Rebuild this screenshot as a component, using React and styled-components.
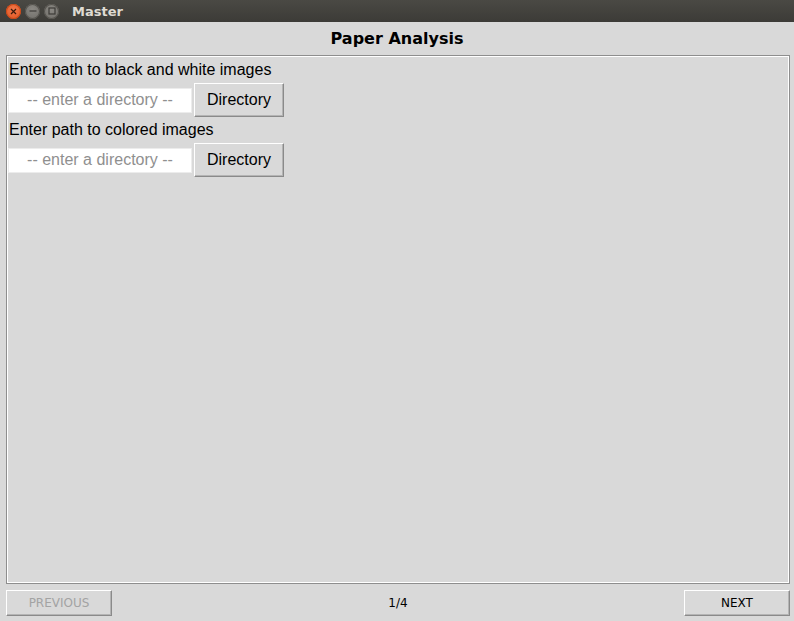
import React from 'react';
import styled, { createGlobalStyle } from 'styled-components';

const GlobalStyle = createGlobalStyle`
    html, body {
        margin:0;
        padding:0;
        background:#d9d9d9;
    }
    #root {
        width:794px;
        height:621px;
        overflow:hidden;
    }
`;

const Window = styled.div`
    display:flex;
    flex-direction:column;
    width:794px;
    height:621px;
    background:#d9d9d9;
    font-family:"Liberation Sans", Arial, sans-serif;
`;

const TitleBar = styled.div`
    display:flex;
    align-items:center;
    height:22px;
    padding-left:6px;
    background:linear-gradient(#4a4944, #3c3b37);
    flex-shrink:0;
`;

const Dot = styled.div`
    display:flex;
    align-items:center;
    justify-content:center;
    width:15px;
    height:15px;
    margin-right:4px;
    border-radius:50%;
    background:${p => (p.close ? 'radial-gradient(circle at 50% 35%, #f0774a, #e0541f)' : 'radial-gradient(circle at 50% 35%, #8a8883, #6e6c67)')};
    box-shadow:inset 0 0 0 1px ${p => (p.close ? '#c84818' : '#55534e')};
`;

const WindowTitle = styled.span`
    margin-left:9px;
    color:#dfdbd2;
    font-family:"DejaVu Sans", sans-serif;
    font-weight:bold;
    font-size:13px;
`;

const Heading = styled.div`
    height:33px;
    display:flex;
    align-items:center;
    justify-content:center;
    font-family:"DejaVu Sans", sans-serif;
    font-weight:bold;
    font-size:16px;
    color:#000;
`;

const Panel = styled.div`
    margin:0 4px 0 6px;
    height:525px;
    border:1px solid #8e8e8e;
    padding:1px;
    box-shadow:inset 0 0 0 1px #ffffff;
    display:flex;
    flex-direction:column;
`;

const FieldLabel = styled.div`
    height:26px;
    line-height:26px;
    padding-left:1px;
    font-size:16px;
    color:#000;
`;

const Row = styled.div`
    display:flex;
    align-items:center;
    height:34px;
`;

const Entry = styled.input`
    box-sizing:border-box;
    width:184px;
    height:25px;
    margin:0 2px 0 0;
    border:1px solid #ececec;
    background:#fff;
    font-family:"Liberation Sans", Arial, sans-serif;
    font-size:16px;
    text-align:center;
    outline:none;
    &::placeholder {
        color:#8f8f8f;
    }
`;

const TkButton = styled.button`
    box-sizing:border-box;
    width:${p => p.w}px;
    height:${p => p.h}px;
    background:#d9d9d9;
    border:1px solid;
    border-color:#ffffff #8a8a8a #8a8a8a #ffffff;
    box-shadow:inset -1px -1px 0 #b4b4b4;
    font-family:${p => (p.small ? '"DejaVu Sans", sans-serif' : '"Liberation Sans", Arial, sans-serif')};
    font-size:${p => (p.small ? 12 : 16)}px;
    color:${p => (p.disabled ? '#a3a3a3' : '#000')};
    padding:0;
    cursor:default;
`;

const Footer = styled.div`
    display:flex;
    align-items:center;
    justify-content:space-between;
    padding:6px 4px 0 6px;
`;

const PageCount = styled.span`
    font-family:"DejaVu Sans", sans-serif;
    font-size:12px;
    color:#000;
`;

function PathField({ label }) {
    return (
        <>
            <FieldLabel>{label}</FieldLabel>
            <Row>
                <Entry placeholder="-- enter a directory --" />
                <TkButton w={90} h={34}>Directory</TkButton>
            </Row>
        </>
    );
}

function App() {
    return (
        <Window>
            <GlobalStyle />
            <TitleBar>
                <Dot close>
                    <svg width="7" height="7" viewBox="0 0 7 7">
                        <path d="M1 1L6 6M6 1L1 6" stroke="#3a1a0c" strokeWidth="1.2" />
                    </svg>
                </Dot>
                <Dot>
                    <svg width="8" height="8" viewBox="0 0 8 8">
                        <path d="M0.5 4H7.5" stroke="#3c3b37" strokeWidth="1.2" />
                    </svg>
                </Dot>
                <Dot>
                    <svg width="8" height="8" viewBox="0 0 8 8">
                        <rect x="1" y="1" width="6" height="6" fill="none" stroke="#3c3b37" strokeWidth="1.2" />
                    </svg>
                </Dot>
                <WindowTitle>Master</WindowTitle>
            </TitleBar>
            <Heading>Paper Analysis</Heading>
            <Panel>
                <PathField label="Enter path to black and white images" />
                <PathField label="Enter path to colored images" />
            </Panel>
            <Footer>
                <TkButton w={106} h={26} small disabled>PREVIOUS</TkButton>
                <PageCount>1/4</PageCount>
                <TkButton w={106} h={26} small>NEXT</TkButton>
            </Footer>
        </Window>
    );
}

export default App;
